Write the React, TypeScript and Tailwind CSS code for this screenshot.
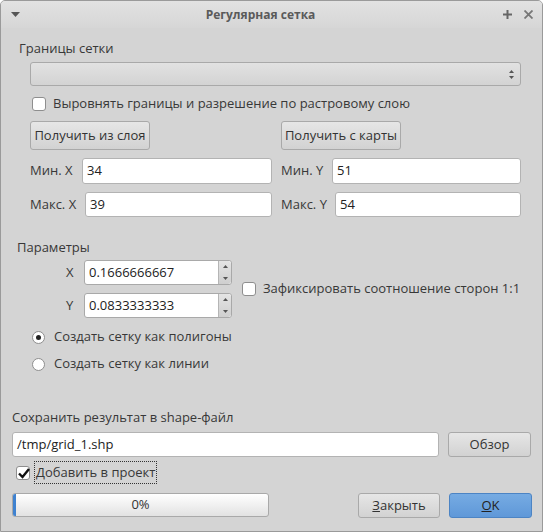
import React from "react";

const font = { fontFamily: "'Open Sans', 'Noto Sans', sans-serif" };

function Btn({ children, className = "" }: { children: React.ReactNode; className?: string }) {
  return (
    <div
      className={`flex items-center justify-center rounded-[3px] border border-[#a9a9a9] bg-gradient-to-b from-[#e6e6e6] to-[#d2d2d2] text-[13px] text-[#333] ${className}`}
    >
      {children}
    </div>
  );
}

function Input({ value, className = "" }: { value: string; className?: string }) {
  return (
    <div
      className={`flex items-center rounded-[3px] border border-[#b3b3b3] bg-white pl-[4px] text-[13px] text-[#222] ${className}`}
    >
      {value}
    </div>
  );
}

function Spin({ value }: { value: string }) {
  return (
    <div className="flex h-[25px] w-[148px] rounded-[3px] border border-[#a9a9a9] bg-white">
      <div className="flex flex-1 items-center pl-[4px] text-[13px] text-[#222]">{value}</div>
      <div className="flex w-[13px] flex-col items-center justify-between rounded-r-[3px] border-l border-[#b5b5b5] bg-gradient-to-b from-[#e4e4e4] to-[#cfcfcf] py-[4px]">
        <svg width="5" height="3" viewBox="0 0 5 3"><path d="M0 3 L2.5 0 L5 3 Z" fill="#555" /></svg>
        <svg width="5" height="3" viewBox="0 0 5 3"><path d="M0 0 L2.5 3 L5 0 Z" fill="#555" /></svg>
      </div>
    </div>
  );
}

function Check({ checked = false }: { checked?: boolean }) {
  return (
    <div className="relative h-[14px] w-[14px] rounded-[3px] border border-[#8e8e8e] bg-white">
      {checked && (
        <svg className="absolute left-[0px] top-[-1px]" width="14" height="14" viewBox="0 0 14 14">
          <path d="M2 7.5 L5.5 11 L12 3" stroke="#111" strokeWidth="2.4" fill="none" />
        </svg>
      )}
    </div>
  );
}

function Radio({ checked = false }: { checked?: boolean }) {
  return (
    <div className="flex h-[13px] w-[13px] items-center justify-center rounded-full border border-[#8e8e8e] bg-white">
      {checked && <div className="h-[5px] w-[5px] rounded-full bg-[#222]" />}
    </div>
  );
}

export default function App() {
  return (
    <div
      style={font}
      className="flex h-[532px] w-[543px] flex-col overflow-hidden rounded-t-[5px] border border-[#9a9a9a] bg-[#d4d4d4] text-[13px] text-[#383838]"
    >
      {/* title bar */}
      <div className="relative flex h-[27px] shrink-0 items-center justify-center bg-gradient-to-b from-[#e2e2e2] to-[#d6d6d6] pr-[22px]">
        <svg className="absolute left-[10px] top-[11px]" width="9" height="5" viewBox="0 0 9 5">
          <path d="M0 0 L9 0 L4.5 5 Z" fill="#555" />
        </svg>
        <span className="text-[12px] font-bold text-[#5a5a5a]">Регулярная сетка</span>
        <svg className="absolute right-[30px] top-[9px]" width="9" height="9" viewBox="0 0 9 9">
          <path d="M4.5 0 V9 M0 4.5 H9" stroke="#666" strokeWidth="2" />
        </svg>
        <svg className="absolute right-[9px] top-[9px]" width="9" height="9" viewBox="0 0 9 9">
          <path d="M0.5 0.5 L8.5 8.5 M8.5 0.5 L0.5 8.5" stroke="#777" strokeWidth="1.8" />
        </svg>
      </div>

      {/* Границы сетки */}
      <div className="ml-[18px] mt-[11px] h-[18px] leading-[18px]">Границы сетки</div>
      <div className="ml-[29px] mt-[5px] flex h-[24px] w-[491px] items-center justify-end rounded-[3px] border border-[#a9a9a9] bg-gradient-to-b from-[#e2e2e2] to-[#d3d3d3] pr-[6px]">
        <div className="flex flex-col gap-[3px]">
          <svg width="5" height="3" viewBox="0 0 5 3"><path d="M0 3 L2.5 0 L5 3 Z" fill="#555" /></svg>
          <svg width="5" height="3" viewBox="0 0 5 3"><path d="M0 0 L2.5 3 L5 0 Z" fill="#555" /></svg>
        </div>
      </div>
      <div className="ml-[31px] mt-[10px] flex h-[16px] items-center gap-[7px]">
        <Check />
        <span>Выровнять границы и разрешение по растровому слою</span>
      </div>
      <div className="ml-[29px] mt-[9px] flex h-[29px]">
        <Btn className="w-[120px]">Получить из слоя</Btn>
        <Btn className="ml-[131px] w-[120px]">Получить с карты</Btn>
      </div>
      <div className="ml-[29px] mt-[8px] flex h-[26px] items-center">
        <span className="w-[52px]">Мин. X</span>
        <Input value="34" className="h-[26px] w-[190px]" />
        <span className="ml-[9px] w-[51px]">Мин. Y</span>
        <Input value="51" className="h-[26px] w-[189px]" />
      </div>
      <div className="ml-[29px] mt-[8px] flex h-[25px] items-center">
        <span className="w-[55px]">Макс. X</span>
        <Input value="39" className="h-[25px] w-[187px]" />
        <span className="ml-[9px] w-[54px]">Макс. Y</span>
        <Input value="54" className="h-[25px] w-[186px]" />
      </div>

      {/* Параметры */}
      <div className="ml-[16px] mt-[21px] h-[18px] leading-[18px]">Параметры</div>
      <div className="mt-[4px] flex">
        <div className="flex flex-col gap-[8px]">
          <div className="flex items-center">
            <span className="ml-[65px] w-[18px]">X</span>
            <Spin value="0.1666666667" />
          </div>
          <div className="flex items-center">
            <span className="ml-[65px] w-[18px]">Y</span>
            <Spin value="0.0833333333" />
          </div>
        </div>
        <div className="ml-[10px] mt-[21px] flex h-[16px] items-center gap-[7px]">
          <Check />
          <span>Зафиксировать соотношение сторон 1:1</span>
        </div>
      </div>
      <div className="ml-[31px] mt-[10px] flex h-[18px] items-center gap-[9px]">
        <Radio checked />
        <span>Создать сетку как полигоны</span>
      </div>
      <div className="ml-[31px] mt-[9px] flex h-[18px] items-center gap-[9px]">
        <Radio />
        <span>Создать сетку как линии</span>
      </div>

      {/* Сохранить */}
      <div className="ml-[11px] mt-[35px] h-[18px] leading-[18px]">Сохранить результат в shape-файл</div>
      <div className="ml-[11px] mt-[6px] flex h-[25px]">
        <Input value="/tmp/grid_1.shp" className="h-[25px] w-[427px]" />
        <Btn className="ml-[9px] h-[25px] w-[83px]">Обзор</Btn>
      </div>
      <div className="ml-[15px] mt-[4px] flex h-[23px] items-center gap-[4px]">
        <Check checked />
        <span className="flex h-[23px] items-center border border-dotted border-[#333] px-[1px]">Добавить в проект</span>
      </div>
      <div className="ml-[11px] mt-[9px] flex h-[25px]">
        <div className="relative flex h-[24px] w-[257px] items-center justify-center overflow-hidden rounded-[3px] border border-[#a9a9a9] bg-gradient-to-b from-[#ffffff] to-[#e2e2e2] text-[13px] text-[#333]">
          <div className="absolute left-0 top-0 h-full w-[3px] bg-[#3f82d0]" />
          0%
        </div>
        <Btn className="ml-[89px] h-[25px] w-[82px]">
          <span><span className="underline">З</span>акрыть</span>
        </Btn>
        <div className="ml-[9px] flex h-[25px] w-[83px] items-center justify-center rounded-[3px] border border-[#4c84c4] bg-gradient-to-b from-[#76abe3] to-[#5f98d8] text-[13px] text-[#222]">
          <span><span className="underline">O</span>K</span>
        </div>
      </div>
    </div>
  );
}
